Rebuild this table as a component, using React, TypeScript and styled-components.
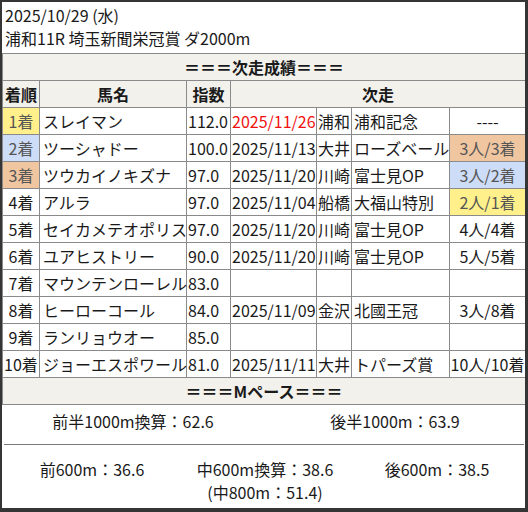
import React from "react";
import styled, { createGlobalStyle } from "styled-components";

const GlobalStyle = createGlobalStyle`
  html, body {
    margin: 0;
    padding: 0;
    background: #353535;
  }
  body {
    font-family: "Noto Sans CJK JP", "Noto Sans", sans-serif;
    color: #1a1a1a;
  }
`;

const Frame = styled.div`
  width: 528px;
  height: 512px;
  box-sizing: border-box;
  padding: 2px 3px 4px 2px;
`;

const Card = styled.div`
  width: 523px;
  height: 506px;
  background: #ffffff;
  font-size: 16px;
  overflow: hidden;
  display: grid;
  grid-template-rows: 51px 352px 39px 1px 63px;
`;

const Header = styled.div`
  box-sizing: border-box;
  padding: 2px 3px 2px 3px;
  line-height: 23px;
`;

const Table = styled.table`
  border-collapse: collapse;
  table-layout: fixed;
  width: 523px;
  font-size: 16px;
  line-height: 23px;
`;

const SectionCell = styled.td`
  background: #f2f1ec;
  border: 1px solid #8a8a8a;
  height: 26px;
  padding: 0;
  text-align: center;
  font-weight: 700;
`;

const HeadCell = styled.th`
  background: #f2f1ec;
  border: 1px solid #8a8a8a;
  height: 26px;
  padding: 0;
  text-align: center;
  font-weight: 700;
`;

type Tone = "gold" | "silver" | "bronze" | undefined;

const toneBg: Record<string, string> = {
  gold: "#fff08c",
  silver: "#cddcf7",
  bronze: "#efc6a0",
};

const Cell = styled.td<{ $align?: "left" | "center"; $tone?: Tone; $red?: boolean; $pl?: number }>`
  border: 1px solid #8a8a8a;
  height: 26px;
  padding: 0 0 0 ${(p) => (p.$pl ?? 1)}px;
  white-space: nowrap;
  overflow: visible;
  text-align: ${(p) => p.$align ?? "left"};
  background: ${(p) => (p.$tone ? toneBg[p.$tone] : "transparent")};
  color: ${(p) => (p.$red ? "#f01010" : p.$tone ? "#555" : "#1a1a1a")};
`;

const PaceRow = styled.div<{ $cols: string; $pt: number }>`
  display: grid;
  grid-template-columns: ${(p) => p.$cols};
  align-items: start;
  padding-top: ${(p) => p.$pt}px;
  box-sizing: border-box;
  line-height: 23px;
`;

const PaceItem = styled.div`
  text-align: center;
  white-space: nowrap;
`;

const Divider = styled.div`
  position: relative;
  z-index: 1;
  height: 1px;
  margin: 0 2px;
  background: #7a7a7a;
`;

type Row = {
  rank: string;
  rankTone?: Tone;
  name: string;
  idx: string;
  date?: string;
  red?: boolean;
  venue?: string;
  race?: string;
  res?: string;
  resTone?: Tone;
};

const rows: Row[] = [
  { rank: "1着", rankTone: "gold", name: "スレイマン", idx: "112.0", date: "2025/11/26", red: true, venue: "浦和", race: "浦和記念", res: "----" },
  { rank: "2着", rankTone: "silver", name: "ツーシャドー", idx: "100.0", date: "2025/11/13", venue: "大井", race: "ローズベール", res: "3人/3着", resTone: "bronze" },
  { rank: "3着", rankTone: "bronze", name: "ツウカイノキズナ", idx: "97.0", date: "2025/11/20", venue: "川崎", race: "富士見OP", res: "3人/2着", resTone: "silver" },
  { rank: "4着", name: "アルラ", idx: "97.0", date: "2025/11/04", venue: "船橋", race: "大福山特別", res: "2人/1着", resTone: "gold" },
  { rank: "5着", name: "セイカメテオポリス", idx: "97.0", date: "2025/11/20", venue: "川崎", race: "富士見OP", res: "4人/4着" },
  { rank: "6着", name: "ユアヒストリー", idx: "90.0", date: "2025/11/20", venue: "川崎", race: "富士見OP", res: "5人/5着" },
  { rank: "7着", name: "マウンテンローレル", idx: "83.0" },
  { rank: "8着", name: "ヒーローコール", idx: "84.0", date: "2025/11/09", venue: "金沢", race: "北國王冠", res: "3人/8着" },
  { rank: "9着", name: "ランリョウオー", idx: "85.0" },
  { rank: "10着", name: "ジョーエスポワール", idx: "81.0", date: "2025/11/11", venue: "大井", race: "トパーズ賞", res: "10人/10着" },
];

export default function App() {
  return (
    <>
      <GlobalStyle />
      <Frame>
        <Card>
          <Header>
            <div>2025/10/29 (水)</div>
            <div>浦和11R 埼玉新聞栄冠賞 ダ2000m</div>
          </Header>
          <Table>
            <colgroup>
              <col style={{ width: 37 }} />
              <col style={{ width: 147 }} />
              <col style={{ width: 44 }} />
              <col style={{ width: 86 }} />
              <col style={{ width: 35 }} />
              <col style={{ width: 98 }} />
              <col style={{ width: 76 }} />
            </colgroup>
            <tbody>
              <tr>
                <SectionCell colSpan={7}>＝＝＝次走成績＝＝＝</SectionCell>
              </tr>
              <tr>
                <HeadCell>着順</HeadCell>
                <HeadCell>馬名</HeadCell>
                <HeadCell>指数</HeadCell>
                <HeadCell colSpan={4}>次走</HeadCell>
              </tr>
              {rows.map((r) => (
                <tr key={r.rank}>
                  <Cell $align="center" $pl={0} $tone={r.rankTone}>{r.rank}</Cell>
                  <Cell $pl={3}>{r.name}</Cell>
                  <Cell $pl={1}>{r.idx}</Cell>
                  <Cell $pl={1} $red={r.red}>{r.date ?? ""}</Cell>
                  <Cell $pl={1}>{r.venue ?? ""}</Cell>
                  <Cell $pl={2}>{r.race ?? ""}</Cell>
                  <Cell $align="center" $pl={0} $tone={r.resTone}>{r.res ?? ""}</Cell>
                </tr>
              ))}
              <tr>
                <SectionCell colSpan={7}>＝＝＝Mペース＝＝＝</SectionCell>
              </tr>
            </tbody>
          </Table>
          <PaceRow $cols="1fr 1fr" $pt={5}>
            <PaceItem>前半1000m換算：62.6</PaceItem>
            <PaceItem>後半1000m：63.9</PaceItem>
          </PaceRow>
          <Divider />
          <PaceRow $cols="180px 166px 1fr" $pt={13}>
            <PaceItem>前600m：36.6</PaceItem>
            <PaceItem>
              中600m換算：38.6
              <br />
              (中800m：51.4)
            </PaceItem>
            <PaceItem>後600m：38.5</PaceItem>
          </PaceRow>
        </Card>
      </Frame>
    </>
  );
}
